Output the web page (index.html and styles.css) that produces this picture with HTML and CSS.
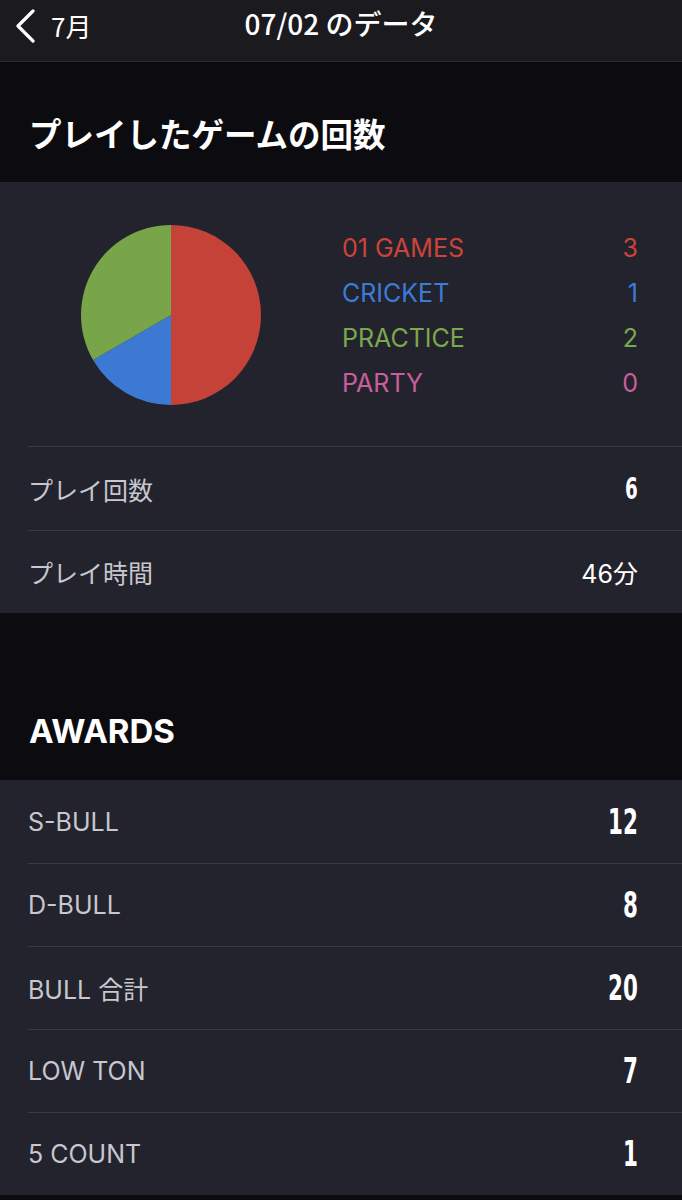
FILE: index.html
```html
<!DOCTYPE html>
<html lang="ja">
<head>
    <meta charset="UTF-8">
    <meta name="viewport" content="width=device-width, initial-scale=1.0">
    <title>07/02 のデータ</title>
    <link rel="stylesheet" href="styles.css">
</head>
<body>
    <header class="nav">
        <a class="back" href="#">
            <svg class="chevron" width="22" height="34" viewBox="0 0 22 34">
                <path d="M19 2 L4 17 L19 32" fill="none" stroke="#fff" stroke-width="3.2" stroke-linecap="round" stroke-linejoin="round"/>
            </svg>
            <span>7月</span>
        </a>
        <div class="nav-title">07/02 のデータ</div>
    </header>

    <div class="section-title">プレイしたゲームの回数</div>
    <div class="card">
        <div class="chart-row">
            <svg class="pie" width="182" height="182" viewBox="0 0 182 182">
                <!-- 01 GAMES 3/6, CRICKET 1/6, PRACTICE 2/6 -->
                <path d="M91 91 L91 1 A90 90 0 0 1 91 181 Z" fill="#c54238"/>
                <path d="M91 91 L91 181 A90 90 0 0 1 13.06 136 Z" fill="#3b79d2"/>
                <path d="M91 91 L13.06 136 A90 90 0 0 1 91 1 Z" fill="#78a44a"/>
            </svg>
            <ul class="legend">
                <li class="games"><span>01 GAMES</span><span>3</span></li>
                <li class="cricket"><span>CRICKET</span><span>1</span></li>
                <li class="practice"><span>PRACTICE</span><span>2</span></li>
                <li class="party"><span>PARTY</span><span>0</span></li>
            </ul>
        </div>
        <div class="row">
            <span class="label">プレイ回数</span>
            <span class="num small">6</span>
        </div>
        <div class="row">
            <span class="label">プレイ時間</span>
            <span class="time">46分</span>
        </div>
    </div>

    <div class="section-title tall">AWARDS</div>
    <div class="card">
        <div class="row">
            <span class="label">S-BULL</span>
            <span class="num">12</span>
        </div>
        <div class="row">
            <span class="label">D-BULL</span>
            <span class="num">8</span>
        </div>
        <div class="row">
            <span class="label">BULL 合計</span>
            <span class="num">20</span>
        </div>
        <div class="row">
            <span class="label">LOW TON</span>
            <span class="num">7</span>
        </div>
        <div class="row">
            <span class="label">5 COUNT</span>
            <span class="num">1</span>
        </div>
    </div>
</body>
</html>
```

FILE: styles.css
```css
body {
    margin: 0;
    background-color: #0c0c10;
    font-family: Inter, "Noto Sans CJK JP", sans-serif;
    color: #fff;
}
.nav {
    height: 61px;
    background-color: #1b1b1f;
    border-bottom: 1px solid #2b2b31;
    display: flex;
    align-items: flex-start;
    justify-content: center;
    position: relative;
}
.back {
    position: absolute;
    left: 14px;
    top: 7px;
    display: flex;
    align-items: center;
    gap: 15px;
    color: #fff;
    text-decoration: none;
    font-family: "Noto Sans CJK JP", sans-serif;
    font-size: 26px;
}
.chevron {
    display: block;
}
.nav-title {
    margin-top: 5px;
    font-family: "Noto Sans CJK JP", sans-serif;
    font-size: 28px;
    font-weight: 500;
    line-height: 36px;
}
.section-title {
    height: 120px;
    box-sizing: border-box;
    display: flex;
    align-items: flex-end;
    padding: 0 0 29px 29px;
    font-family: "Noto Sans CJK JP", sans-serif;
    font-size: 32.5px;
    font-weight: 700;
    line-height: 40px;
}
.section-title.tall {
    height: 167px;
    font-family: Inter, sans-serif;
    font-size: 33px;
}
.card {
    background-color: #23232e;
    padding-left: 28px;
}
.chart-row {
    height: 265px;
    box-sizing: border-box;
    border-bottom: 1px solid #3a3a45;
    display: flex;
    align-items: center;
    padding: 0 44px 0 52px;
}
.pie {
    display: block;
    margin-top: 2px;
}
.legend {
    list-style: none;
    margin: 4px 0 0 80px;
    padding: 0;
    flex: 1;
    font-size: 25px;
}
.legend li {
    display: flex;
    justify-content: space-between;
    height: 45px;
    line-height: 45px;
}
.games { color: #cb4339; }
.cricket { color: #3c7bd6; }
.practice { color: #7ba84b; }
.party { color: #c95e9c; }
.row {
    height: 83px;
    box-sizing: border-box;
    display: flex;
    align-items: center;
    justify-content: space-between;
    padding-right: 44px;
}
.row + .row {
    border-top: 1px solid #3a3a45;
}
.label {
    color: #c7c7cd;
    font-size: 25px;
}
.num {
    font-family: "Liberation Sans Narrow", "DejaVu Sans Condensed", sans-serif;
    font-weight: 700;
    font-size: 35px;
    display: inline-block;
    transform: scaleX(0.68);
    transform-origin: right center;
}
.num.small {
    font-size: 30px;
}
.time {
    font-family: Inter, "Noto Sans CJK JP", sans-serif;
    font-size: 25px;
}
```
